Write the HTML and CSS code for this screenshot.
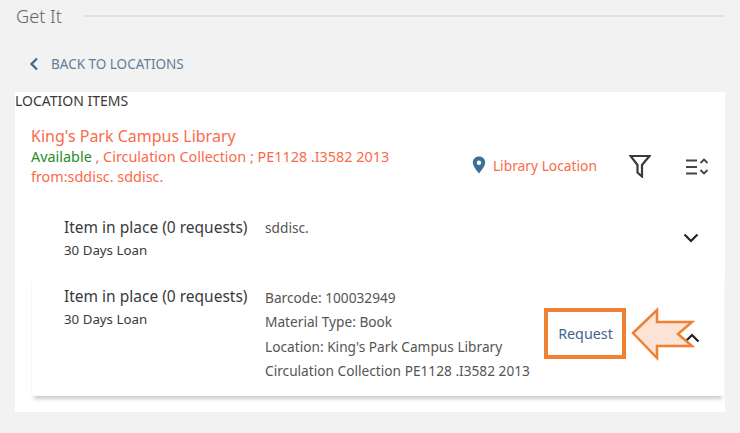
FILE: index.html
```html
<!DOCTYPE html>
<html lang="en">
<head>
<meta charset="utf-8">
<title>Get It</title>
<link rel="stylesheet" href="styles.css">
</head>
<body>
<div class="page">
  <header class="section-head">
    <h2 class="section-title">Get It</h2>
    <span class="section-rule"></span>
  </header>
  <a class="back-link">
    <svg class="back-icon" width="10" height="14" viewBox="0 0 10 14"><path d="M8 1.500 2.500 7 8 12.500" fill="none" stroke="#3d6e96" stroke-width="2.400"/></svg>
    <span>BACK TO LOCATIONS</span>
  </a>
  <main class="panel">
    <div class="panel-title">LOCATION ITEMS</div>
    <div class="location">
      <div class="location-text">
        <div class="location-name">King's Park Campus Library</div>
        <div class="location-detail"><span class="available">Available</span> , Circulation Collection ; PE1128 .I3582 2013<br>from:sddisc. sddisc.</div>
      </div>
      <div class="location-actions">
        <a class="map-link">
          <svg width="14" height="18" viewBox="0 0 14 18"><path fill-rule="evenodd" d="M7 0.500C3.400 0.500 0.800 3.200 0.800 6.600 0.800 10.800 7 17.500 7 17.500s6.200-6.700 6.200-10.900C13.200 3.200 10.600 0.500 7 0.500Zm0 4a2.200 2.200 0 1 1 0 4.400 2.200 2.200 0 0 1 0-4.400Z" fill="#3d6e96"/></svg>
          <span>Library Location</span>
        </a>
        <svg class="tool-filter" width="22" height="24" viewBox="0 0 22 24"><path d="M1.500 2h19l-7.500 9v11.500l-4.500-4V11z" fill="none" stroke="#3a3a3a" stroke-width="2.200"/></svg>
        <svg class="tool-sort" width="24" height="20" viewBox="0 0 24 20"><path d="M1 3.500h11M1 10h11M1 16.500h11" stroke="#444" stroke-width="2" fill="none"/><path d="M15.500 6 19 2.500 22.500 6M15.500 13l3.500 3.500 3.500-3.500" stroke="#444" stroke-width="1.800" fill="none"/></svg>
      </div>
    </div>
    <div class="item item-collapsed">
      <div class="item-main">
        <div class="item-status">Item in place (0 requests)</div>
        <div class="item-policy">30 Days Loan</div>
      </div>
      <div class="item-info"><div>sddisc.</div></div>
      <svg class="chevron" width="16" height="10" viewBox="0 0 16 10"><path d="M1.500 1.500 8 8l6.500-6.500" fill="none" stroke="#222" stroke-width="2.200"/></svg>
    </div>
    <div class="item item-open">
      <div class="item-main">
        <div class="item-status">Item in place (0 requests)</div>
        <div class="item-policy">30 Days Loan</div>
      </div>
      <div class="item-info">
        <div>Barcode: 100032949</div>
        <div>Material Type: Book</div>
        <div>Location: King's Park Campus Library</div>
        <div>Circulation Collection PE1128 .I3582 2013</div>
      </div>
      <a class="request">Request</a>
      <svg class="chevron-up" width="16" height="10" viewBox="0 0 16 10"><path d="M1.500 8.500 8 2l6.500 6.500" fill="none" stroke="#222" stroke-width="2.200"/></svg>
      <svg class="arrow" width="66" height="56" viewBox="0 0 66 56"><path d="M3 27 27 4v12h35L48 28l14 12H27v12z" fill="#fbe3d5" stroke="#f08132" stroke-width="2.500"/></svg>
    </div>
  </main>
</div>
</body>
</html>
```
FILE: styles.css
```css
* { box-sizing: border-box; }
html, body { margin: 0; padding: 0; }
body {
  width: 740px;
  height: 433px;
  overflow: hidden;
  background: #f2f2f2;
  font-family: "Noto Sans", "Open Sans", sans-serif;
  color: #333;
}
.page { padding: 4px 15px 0 15px; }
.section-head { display: flex; align-items: center; gap: 21px; height: 24px; }
.section-title { margin: 0 0 0 1px; font-size: 18.200px; font-weight: 300; color: #666; line-height: 24px; }
.section-rule { flex: 1; height: 2px; background: #e2e2e2; }
.back-link {
  display: flex;
  align-items: center;
  gap: 12px;
  margin: 26px 0 0 14px;
  height: 20px;
  font-size: 13.500px;
  color: #5c7f9e;
}
.panel { margin-top: 18px; height: 320px; background: #fff; padding: 0 1px 0 0; }
.panel-title { font-size: 14px; line-height: 18px; color: #3a3a3a; }
.location { display: flex; justify-content: space-between; padding: 15px 0 0 16px; height: 92px; color: #fb6a4a; }
.location-name { font-size: 16px; line-height: 22px; }
.location-detail { font-size: 14.400px; line-height: 20px; }
.available { color: #2a8a2a; }
.location-actions { display: flex; align-items: flex-start; padding: 28px 15px 0 0; }
.map-link { display: flex; align-items: center; gap: 7px; font-size: 13.800px; margin-right: 32px; height: 24px; }
.tool-filter { margin-right: 34px; margin-top: 1px; }
.tool-sort { margin-top: 4px; }
.item { position: relative; display: flex; margin-left: 17px; }
.item-collapsed { height: 72px; padding: 14px 0 0 32px; }
.item-open { height: 122px; padding: 11px 0 0 32px; box-shadow: 0 5px 4px -2px rgba(0,0,0,.2), 0 0 2px rgba(0,0,0,.03); border-radius: 2px; }
.item-main { width: 201px; flex: none; }
.item-status { font-size: 15.500px; line-height: 22px; color: #3a3a3a; }
.item-policy { font-size: 13.300px; line-height: 20px; margin-top: 2px; color: #3a3a3a; }
.item-info { font-size: 13.700px; line-height: 24.300px; color: #555; }
.item-open .item-info { padding-top: 1px; }
.chevron { position: absolute; right: 25px; top: 31px; }
.chevron-up { position: absolute; right: 24px; top: 59px; }
.request {
  position: absolute;
  left: 512px;
  top: 34px;
  width: 82px;
  height: 51px;
  padding-left: 1px;
  border: 4px solid #f08132;
  display: flex;
  align-items: center;
  justify-content: center;
  font-size: 14.300px;
  color: #44658c;
  background: #fff;
}
.arrow { position: absolute; left: 598px; top: 32px; }
```
